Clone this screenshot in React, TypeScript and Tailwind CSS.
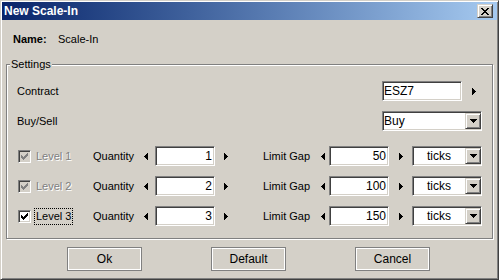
import React from "react";

const sunken =
  "border border-t-[#808080] border-l-[#808080] border-b-white border-r-white shadow-[inset_1px_1px_0_#404040,inset_-1px_-1px_0_#d4d0c8]";
const raised =
  "border border-t-[#d4d0c8] border-l-[#d4d0c8] border-b-[#404040] border-r-[#404040] shadow-[inset_1px_1px_0_#ffffff,inset_-1px_-1px_0_#808080]";

function Arrow({ dir }: { dir: "left" | "right" }) {
  const d =
    dir === "right"
      ? "M0 0h1v7H0z M1 1h1v5H1z M2 2h1v3H2z M3 3h1v1H3z"
      : "M3 0h1v7H3z M2 1h1v5H2z M1 2h1v3H1z M0 3h1v1H0z";
  return (
    <svg width="4" height="7" viewBox="0 0 4 7" shapeRendering="crispEdges" className="shrink-0">
      <path d={d} fill="#000" />
    </svg>
  );
}

function DropButton() {
  return (
    <div className={`${raised} w-[16px] h-[16px] bg-[#d4d0c8] flex items-center justify-center shrink-0`}>
      <svg width="7" height="4" viewBox="0 0 7 4" shapeRendering="crispEdges">
        <path d="M0 0h7v1H0z M1 1h5v1H1z M2 2h3v1H2z M3 3h1v1H3z" fill="#000" />
      </svg>
    </div>
  );
}

function Select({ value, width, center }: { value: string; width: string; center?: boolean }) {
  return (
    <div className={`${sunken} ${width} h-[20px] bg-white flex items-center shrink-0`}>
      <span className={`flex-1 text-[12px] leading-[16px] text-black ${center ? "text-center" : "pl-[1px]"}`}>
        {value}
      </span>
      <DropButton />
    </div>
  );
}

function NumBox({ value }: { value: number }) {
  return (
    <div className={`${sunken} w-[60px] h-[20px] bg-white flex items-center justify-end pr-[2px] text-[12px] shrink-0`}>
      {value}
    </div>
  );
}

function Checkbox({ disabled }: { disabled?: boolean }) {
  return (
    <div
      className={`${sunken} w-[13px] h-[13px] shrink-0 flex items-center justify-center ${
        disabled ? "bg-[#d4d0c8]" : "bg-white"
      }`}
    >
      <svg width="7" height="7" viewBox="0 0 7 7" shapeRendering="crispEdges">
        <path
          d="M6 0h1v1h-1z M5 1h2v1h-2z M0 2h1v1H0z M4 2h3v1H4z M0 3h2v1H0z M3 3h3v1H3z M0 4h5v1H0z M1 5h3v1H1z M2 6h1v1H2z"
          fill={disabled ? "#808080" : "#000"}
        />
      </svg>
    </div>
  );
}

function LevelRow({
  n,
  qty,
  gap,
  disabled,
  focused,
  className,
}: {
  n: number;
  qty: number;
  gap: number;
  disabled?: boolean;
  focused?: boolean;
  className?: string;
}) {
  return (
    <div className={`flex items-center h-[20px] ${className ?? ""}`}>
      <div className="w-[76px] flex items-center pl-[1px] shrink-0">
        <Checkbox disabled={disabled} />
        {focused ? (
          <span className="ml-[3px] px-[1px] border border-dotted border-black leading-[15px]">Level {n}</span>
        ) : (
          <span
            className={`ml-[5px] ${
              disabled ? "text-[#808080] [text-shadow:1px_1px_0_#ffffff]" : ""
            }`}
          >
            Level {n}
          </span>
        )}
      </div>
      <span className="w-[51px] shrink-0">Quantity</span>
      <Arrow dir="left" />
      <div className="ml-[7px]">
        <NumBox value={qty} />
      </div>
      <div className="ml-[9px]">
        <Arrow dir="right" />
      </div>
      <span className="ml-[35px] w-[58px] shrink-0">Limit Gap</span>
      <Arrow dir="left" />
      <div className="ml-[4px]">
        <NumBox value={gap} />
      </div>
      <div className="ml-[10px]">
        <Arrow dir="right" />
      </div>
      <div className="ml-[9px]">
        <Select value="ticks" width="w-[70px]" center />
      </div>
    </div>
  );
}

function DlgButton({ label }: { label: string }) {
  return (
    <button className="w-[75px] h-[24px] border border-[#808080] shadow-[inset_1px_1px_0_#ffffff,inset_-1px_-1px_0_#ffffff] bg-[#d4d0c8] text-[12px] text-black">
      {label}
    </button>
  );
}

export default function App() {
  return (
    <div className="w-[499px] h-[280px] bg-[#d4d0c8] font-['Liberation_Sans',Arial,sans-serif] text-[11px] text-black">
      <div className={`${raised} w-full h-full p-[1px] flex flex-col`}>
        {/* title bar */}
        <div className="h-[18px] bg-linear-to-r from-[#0a246a] to-[#a6caf0] flex items-center justify-between pl-[2px] pr-[4px] shrink-0">
          <span className="text-white font-bold text-[12px] leading-[18px]">New Scale-In</span>
          <div className={`${raised} w-[16px] h-[14px] bg-[#d4d0c8] flex items-center justify-center`}>
            <svg width="8" height="7" viewBox="0 0 8 7" shapeRendering="crispEdges">
              <path
                d="M0 0h2v1H0z M6 0h2v1H6z M1 1h2v1H1z M5 1h2v1H5z M2 2h4v1H2z M3 3h2v1H3z M2 4h4v1H2z M1 5h2v1H1z M5 5h2v1H5z M0 6h2v1H0z M6 6h2v1H6z"
                fill="#000"
              />
            </svg>
          </div>
        </div>

        {/* name */}
        <div className="mt-[9px] h-[20px] flex items-center pl-[11px]">
          <span className="font-bold w-[45px]">Name:</span>
          <span>Scale-In</span>
        </div>

        {/* settings group */}
        <div className="relative mt-[15px] ml-[4px] w-[487px] border border-[#808080] shadow-[inset_1px_1px_0_#ffffff,1px_1px_0_#ffffff] pt-[16px] pb-[12px] pl-[10px] pr-[10px]">
          <span className="absolute top-[-7px] left-[3px] px-[1px] leading-[13px] bg-[#d4d0c8]">Settings</span>

          <div className="flex items-center h-[20px]">
            <span>Contract</span>
            <div className="ml-auto w-[100px] flex items-center">
              <div className={`${sunken} w-[80px] h-[20px] bg-white flex items-center pl-[1px] text-[12px]`}>
                ESZ7
              </div>
              <div className="ml-[10px]">
                <Arrow dir="right" />
              </div>
            </div>
          </div>

          <div className="flex items-center h-[20px] mt-[10px]">
            <span>Buy/Sell</span>
            <div className="ml-auto">
              <Select value="Buy" width="w-[100px]" />
            </div>
          </div>

          <LevelRow n={1} qty={1} gap={50} disabled className="mt-[15px]" />
          <LevelRow n={2} qty={2} gap={100} disabled className="mt-[10px]" />
          <LevelRow n={3} qty={3} gap={150} focused className="mt-[10px]" />
        </div>

        {/* buttons */}
        <div className="mt-[8px] flex pl-[65px] gap-[69px]">
          <DlgButton label="Ok" />
          <DlgButton label="Default" />
          <DlgButton label="Cancel" />
        </div>
      </div>
    </div>
  );
}
